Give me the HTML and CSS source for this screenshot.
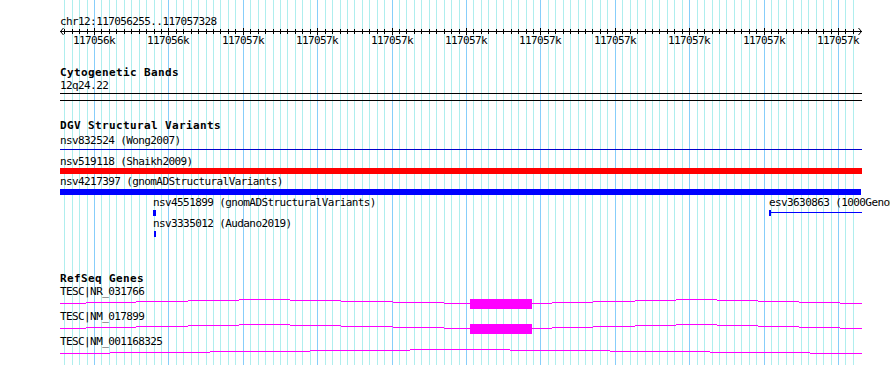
FILE: index.html
```html
<!DOCTYPE html>
<html lang="en">
<head>
    <meta charset="UTF-8">
    <title>chr12:117056255..117057328</title>
    <link rel="stylesheet" href="styles.css">
</head>
<body>
    <div class="panel">
        <svg class="grid" id="grid" width="890" height="365"></svg>

        <svg class="ruler" id="ruler" width="890" height="32">
            <text class="ruler-text" x="60" y="11">chr12:117056255..117057328</text>
            <rect x="60" y="17" width="802" height="1" fill="#000"/>
            <polyline points="63.5,14 60.5,17.5 63.5,21" fill="none" stroke="#000" stroke-width="1"/>
            <polyline points="858.5,14 861.5,17.5 858.5,21" fill="none" stroke="#000" stroke-width="1"/>
            <g id="ticks"></g>
        </svg>

        <section class="track cyto">
            <h2 class="track-title">Cytogenetic Bands</h2>
            <div class="label gap1">12q24.22</div>
            <div class="ideogram"></div>
        </section>

        <section class="track dgv">
            <h2 class="track-title">DGV Structural Variants</h2>
            <div class="label gap3">nsv832524 (Wong2007)</div>
            <div class="thin-line"></div>
            <div class="label gap6">nsv519118 (Shaikh2009)</div>
            <div class="bar red"></div>
            <div class="label gap2">nsv4217397 (gnomADStructuralVariants)</div>
            <div class="bar blue"></div>

            <div class="sub-labels gap2">
                <span class="label free" style="left: 153px">nsv4551899 (gnomADStructuralVariants)</span>
                <span class="label free" style="left: 769px">esv3630863 (1000GenomesPhase3)</span>
            </div>
            <div class="sub-features">
                <span class="mark" style="left: 153px; width: 3px"></span>
                <span class="span-line" style="left: 769px; width: 93px"></span>
            </div>

            <div class="sub-labels gap2">
                <span class="label free" style="left: 153px">nsv3335012 (Audano2019)</span>
            </div>
            <div class="sub-features">
                <span class="mark" style="left: 154px; width: 2px"></span>
            </div>
        </section>

        <section class="track refseq">
            <h2 class="track-title">RefSeq Genes</h2>
            <div class="label gap1">TESC|NR_031766</div>
            <svg class="gene" width="890" height="10">
                <path class="intron" d="M60 4.5H86 M86 3.5H136 M136 2.5H188 M188 1.5H239 M239 0.5H290 M290 1.5H341 M341 2.5H393 M393 3.5H444 M444 4.5H470 M532 4.5H552 M552 3.5H593 M593 2.5H635 M635 1.5H676 M676 0.5H717 M717 1.5H758 M758 2.5H799 M799 3.5H840 M840 4.5H862"/>
                <rect class="exon" x="470" y="0" width="62" height="10"/>
            </svg>
            <div class="label gap2">TESC|NM_017899</div>
            <svg class="gene" width="890" height="10">
                <path class="intron" d="M60 4.5H86 M86 3.5H136 M136 2.5H188 M188 1.5H239 M239 0.5H290 M290 1.5H341 M341 2.5H393 M393 3.5H444 M444 4.5H470 M532 4.5H552 M552 3.5H593 M593 2.5H635 M635 1.5H676 M676 0.5H717 M717 1.5H758 M758 2.5H799 M799 3.5H840 M840 4.5H862"/>
                <rect class="exon" x="470" y="0" width="62" height="10"/>
            </svg>
            <div class="label gap2">TESC|NM_001168325</div>
            <svg class="gene" width="890" height="10">
                <path class="intron" d="M60 4.5H110 M110 3.5H210 M210 2.5H310 M310 1.5H410 M410 0.5H510 M510 1.5H610 M610 2.5H710 M710 3.5H810 M810 4.5H862"/>
            </svg>
        </section>
    </div>

    <script>
        // grid lines every 10bp, major every 100bp
        const grid = document.getElementById('grid');
        const ticks = document.getElementById('ticks');
        const ns = 'http://www.w3.org/2000/svg';

        function toX(bp) {
            return Math.round(94 + (bp - 117056300) * 0.744);
        }

        for (let bp = 117056260; bp <= 117057320; bp += 10) {
            const x = toX(bp);
            const major = bp % 100 === 0;

            const line = document.createElementNS(ns, 'rect');
            line.setAttribute('x', x);
            line.setAttribute('y', 0);
            line.setAttribute('width', 1);
            line.setAttribute('height', 365);
            line.setAttribute('class', major ? 'grid-major' : 'grid-minor');
            grid.appendChild(line);

            const tick = document.createElementNS(ns, 'rect');
            tick.setAttribute('x', x);
            tick.setAttribute('y', major ? 14 : 15);
            tick.setAttribute('width', 1);
            tick.setAttribute('height', major ? 7 : 5);
            tick.setAttribute('fill', '#000');
            ticks.appendChild(tick);

            if (major) {
                const label = document.createElementNS(ns, 'text');
                label.setAttribute('x', x);
                label.setAttribute('y', 30);
                label.setAttribute('class', 'ruler-text tick-label');
                label.textContent = Math.round(bp / 1000) + 'k';
                ticks.appendChild(label);
            }
        }
    </script>
</body>
</html>
```

FILE: styles.css
```css
body {
    margin: 0;
    background: #fff;
    color: #000;
    font-family: "DejaVu Sans Mono", monospace;
}
.panel {
    position: relative;
    width: 890px;
    height: 365px;
    overflow: hidden;
}
.grid {
    position: absolute;
    left: 0;
    top: 0;
}
.grid-minor {
    fill: #afeeee;
}
.grid-major {
    fill: #87cefa;
}
.ruler {
    position: relative;
    display: block;
    margin-top: 14px;
}
.ruler-text {
    font-size: 11px;
    letter-spacing: -0.6px;
    fill: #000;
}
.tick-label {
    text-anchor: middle;
}
.track {
    position: relative;
}
.track-title {
    margin: 0;
    padding-left: 60px;
    font-size: 11px;
    font-weight: bold;
    letter-spacing: 0.38px;
    line-height: 12px;
}
.label {
    padding-left: 60px;
    font-size: 11px;
    letter-spacing: -0.6px;
    line-height: 12px;
    white-space: nowrap;
}
.gap1 {
    margin-top: 1px;
}
.gap2 {
    margin-top: 2px;
}
.gap3 {
    margin-top: 3px;
}
.gap6 {
    margin-top: 6px;
}
.cyto {
    margin-top: 21px;
}
.ideogram {
    margin: 1px 0 0 60px;
    width: 802px;
    height: 6px;
    border-top: 1px solid #000;
    border-bottom: 1px solid #000;
}
.dgv {
    margin-top: 19px;
}
.thin-line {
    margin: 2px 0 0 60px;
    width: 802px;
    height: 1px;
    background: #0000cc;
}
.bar {
    margin-left: 60px;
    height: 6px;
}
.bar.red {
    width: 802px;
    background: #ff0000;
}
.bar.blue {
    margin-top: 1px;
    width: 801px;
    background: #0000ff;
}
.sub-labels {
    position: relative;
    height: 12px;
}
.label.free {
    position: absolute;
    top: 0;
    padding-left: 0;
}
.sub-features {
    position: relative;
    margin-top: 1px;
    height: 6px;
}
.mark {
    position: absolute;
    top: 0;
    height: 6px;
    background: #0000ff;
}
.span-line {
    position: absolute;
    top: 0;
    height: 6px;
    box-sizing: border-box;
    border-left: 2px solid #0000ff;
}
.span-line::after {
    content: "";
    position: absolute;
    left: 0;
    right: 0;
    top: 2px;
    height: 1px;
    background: #0000ff;
}
.refseq {
    margin-top: 36px;
}
.gene {
    display: block;
    margin-top: 1px;
}
.intron {
    fill: none;
    stroke: #ff00ff;
    stroke-width: 1;
}
.exon {
    fill: #ff00ff;
}
```
